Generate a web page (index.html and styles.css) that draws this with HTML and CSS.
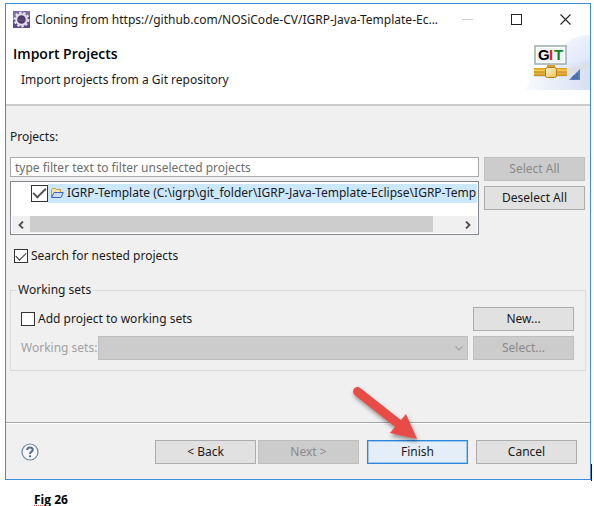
FILE: index.html
```html
<!DOCTYPE html>
<html lang="en">
<head>
<meta charset="utf-8">
<title>Import Projects</title>
<link rel="stylesheet" href="styles.css">
</head>
<body>
<main class="page">
  <section class="dialog">
    <div class="titlebar">
      <svg class="app-icon" width="17" height="17" viewBox="0 0 17 17" aria-hidden="true">
        <rect width="17" height="17" fill="#7d6ca6"/>
        <path d="M0 17V9l17-4v12z" fill="#5d4a88"/>
        <circle cx="8.500" cy="8.500" r="6.900" fill="none" stroke="#e9e6ee" stroke-width="2" stroke-dasharray="2.400 1.870"/>
        <circle cx="8.500" cy="8.500" r="5.300" fill="#4a3a68" stroke="#e4e0ea" stroke-width="2"/>
        <path d="M5 8h7M5 9.500h7" stroke="#6b5c86" stroke-width=".6"/>
      </svg>
      <span class="titlebar-text">Cloning from https://github.com/NOSiCode-CV/IGRP-Java-Template-Ec...</span>
      <div class="window-controls">
        <button type="button" class="window-button" aria-label="Minimize" disabled>
          <svg width="11" height="11" viewBox="0 0 11 11"><path d="M0 5.500h11" stroke="#d0d0d0"/></svg>
        </button>
        <button type="button" class="window-button" aria-label="Maximize">
          <svg width="11" height="11" viewBox="0 0 11 11"><rect x=".5" y=".5" width="10" height="10" fill="none" stroke="#222"/></svg>
        </button>
        <button type="button" class="window-button" aria-label="Close">
          <svg width="11" height="11" viewBox="0 0 11 11"><path d="M.5.5l10 10M10.500.5l-10 10" stroke="#222" stroke-width="1.100"/></svg>
        </button>
      </div>
    </div>

    <header class="banner">
      <div class="banner-text">
        <h1>Import Projects</h1>
        <p>Import projects from a Git repository</p>
      </div>
      <svg class="banner-art" width="64" height="56" viewBox="0 0 64 56" role="img" aria-label="Git">
        <defs>
          <linearGradient id="sky" x1="0" y1="0" x2="1" y2="1">
            <stop offset="0" stop-color="#f8faff"/><stop offset="1" stop-color="#dbe4f6"/>
          </linearGradient>
          <linearGradient id="low" x1="0" y1="0" x2="1" y2="0">
            <stop offset="0" stop-color="#f7f9fd"/><stop offset="1" stop-color="#d6dff4"/>
          </linearGradient>
          <linearGradient id="pipe" x1="0" y1="0" x2="0" y2="1">
            <stop offset="0" stop-color="#d99a1c"/><stop offset=".4" stop-color="#ffd75e"/><stop offset="1" stop-color="#c98a14"/>
          </linearGradient>
          <linearGradient id="hub" x1="0" y1="0" x2="1" y2="1">
            <stop offset="0" stop-color="#fffbe0"/><stop offset="1" stop-color="#eebc4a"/>
          </linearGradient>
        </defs>
        <path d="M28 22C36 8 48 0 64 0V32H28z" fill="url(#sky)"/>
        <path d="M0 55C4 42 12 35 22 31L64 26V55z" fill="url(#low)"/>
        <path d="M6 42L64 28v4L40 42z" fill="#dcdfe6"/>
        <rect x="9" y="11" width="31" height="18" fill="#fff" stroke="#9cadad" stroke-width="1.500"/>
        <rect x="11" y="13" width="27" height="14" fill="#eef3f6"/>
        <text class="art-label" x="12" y="25">G</text>
        <text class="art-label art-red" x="23" y="25">I</text>
        <text class="art-label art-green" x="28" y="25">T</text>
        <rect x="21" y="30" width="8" height="4" fill="#d99f27"/>
        <rect x="8" y="33" width="33" height="8" fill="url(#pipe)"/>
        <path d="M8 37h33" stroke="#b77a12"/>
        <rect x="19.500" y="32.500" width="11" height="10" rx="2" fill="url(#hub)" stroke="#b47c18"/>
        <path d="M43 45L54 34v11z" fill="#5a7db8"/>
        <path d="M47 44v-3h2v3M51 44v-6" stroke="#3f62a0" fill="none"/>
      </svg>
    </header>

    <form class="content">
      <label class="projects-label" for="filter">Projects:</label>
      <div class="projects">
        <div class="project-fields">
          <input class="filter" id="filter" type="text" placeholder="type filter text to filter unselected projects">
          <div class="project-list">
            <div class="project-row">
              <input class="check check-large" type="checkbox" id="project" checked>
              <label class="project-name" for="project">
                <svg width="14" height="12" viewBox="0 0 14 12" aria-hidden="true">
                  <path d="M1.500 10.500V2.500l1-1h3l1 1h4v3" fill="#fbe6ae" stroke="#c7963e"/>
                  <path d="M1.500 10.500L4 5.500h9.300l-2.300 5z" fill="#c8dcf8" stroke="#4267b8"/>
                </svg>
                <span>IGRP-Template (C:\igrp\git_folder\IGRP-Java-Template-Eclipse\IGRP-Temp</span>
              </label>
            </div>
            <div class="scrollbar">
              <button type="button" class="scroll-arrow" aria-label="Scroll left"><svg width="6" height="8" viewBox="0 0 6 8"><path d="M5 .5L1.500 4 5 7.500" fill="none" stroke="#4d4d4d" stroke-width="1.800"/></svg></button>
              <div class="scroll-track"><div class="scroll-thumb"></div></div>
              <button type="button" class="scroll-arrow" aria-label="Scroll right"><svg width="6" height="8" viewBox="0 0 6 8"><path d="M1 .5L4.500 4 1 7.500" fill="none" stroke="#4d4d4d" stroke-width="1.800"/></svg></button>
            </div>
          </div>
        </div>
        <div class="project-actions">
          <button type="button" class="button" disabled>Select All</button>
          <button type="button" class="button">Deselect All</button>
        </div>
      </div>

      <label class="check-row nested"><input class="check" type="checkbox" checked>Search for nested projects</label>

      <fieldset class="group">
        <legend>Working sets</legend>
        <div class="group-row">
          <label class="check-row"><input class="check" type="checkbox">Add project to working sets</label>
          <button type="button" class="button">New...</button>
        </div>
        <div class="group-row">
          <label class="sets-label" for="sets">Working sets:</label>
          <div class="select-wrap">
            <select class="sets" id="sets" disabled><option></option></select>
            <svg class="chevron" width="8" height="5" viewBox="0 0 8 5" aria-hidden="true"><path d="M.5.5L4 4 7.500.5" fill="none" stroke="#a3a3a3" stroke-width="1.200"/></svg>
          </div>
          <button type="button" class="button" disabled>Select...</button>
        </div>
      </fieldset>
    </form>

    <footer class="footer">
      <button type="button" class="help" aria-label="Help">
        <svg width="18" height="18" viewBox="0 0 18 18">
          <circle cx="9" cy="9" r="8" fill="#f6f8fb" stroke="#7183a3" stroke-width="1.200"/>
          <path d="M6.200 7C6.200 3.800 11.800 3.800 11.800 6.800C11.800 8.800 9 8.600 9 11" fill="none" stroke="#566b92" stroke-width="2"/>
          <rect x="8" y="12.300" width="2" height="2" fill="#566b92"/>
        </svg>
      </button>
      <div class="steps">
        <button type="button" class="button">&lt; Back</button>
        <button type="button" class="button" disabled>Next &gt;</button>
      </div>
      <button type="button" class="button primary">Finish</button>
      <button type="button" class="button">Cancel</button>
      <svg class="pointer" width="76" height="66" viewBox="0 0 76 66" aria-hidden="true">
        <path d="M8.500 9.500L51 43" stroke="#e94b46" stroke-width="9" stroke-linecap="round"/>
        <path d="M57 32L68 57 41 51z" fill="#e94b46"/>
      </svg>
    </footer>
  </section>
  <span class="caret"></span>
  <p class="caption"><span class="misspelled">Fig</span> 26</p>
</main>
</body>
</html>
```
FILE: styles.css
```css
* {
  box-sizing: border-box;
}

body {
  margin: 0;
  background: #fff;
  color: #1a1a1a;
  font: 12px/16px "Noto Sans", "Open Sans", sans-serif;
  overflow: hidden;
}

h1,
p {
  margin: 0;
}

button,
input,
select {
  font: inherit;
  color: inherit;
}

.page {
  position: relative;
  padding: 3px 3px 0 5px;
}

.dialog {
  border: 1px solid #3b8fdb;
  background: #f0f0f0;
}

.titlebar {
  display: flex;
  align-items: center;
  height: 31px;
  padding-left: 7px;
  background: #fff;
}

.titlebar-text {
  flex: 1;
  margin-left: 5px;
  white-space: nowrap;
}

.window-controls {
  display: flex;
}

.window-button {
  display: grid;
  place-items: center;
  width: 49px;
  height: 30px;
  padding: 0;
  border: 0;
  background: none;
}

.banner {
  display: flex;
  justify-content: space-between;
  height: 71px;
  background: #fff;
  border-bottom: 2px solid #cbcbcb;
}

.banner-text {
  padding: 10px 0 0 7px;
}

h1 {
  font-family: "Open Sans", sans-serif;
  font-size: 14px;
  font-weight: 600;
  line-height: 18px;
  color: #000;
}

.banner p {
  padding: 9px 0 0 8px;
}

.art-label {
  font: bold 15px "Liberation Sans", sans-serif;
}

.art-red {
  fill: #d81f26;
}

.art-green {
  fill: #15861f;
}

.content {
  padding: 23px 4px 0;
}

.projects-label {
  display: block;
  margin-bottom: 12px;
}

.projects {
  display: flex;
  gap: 5px;
  padding-right: 1px;
}

.project-fields {
  flex: 1;
  min-width: 0;
}

.filter {
  display: block;
  width: 100%;
  height: 20px;
  padding: 0 4px;
  border: 1px solid #ababab;
  background: #fff;
}

.filter::placeholder {
  color: #6d6d6d;
  opacity: 1;
}

.project-list {
  margin-top: 4px;
  padding: 1px;
  border: 1px solid #828790;
  background: #fff;
}

.project-row {
  display: flex;
  align-items: center;
  height: 20px;
  margin-bottom: 13px;
  padding-left: 19px;
}

.project-name {
  display: flex;
  flex: 1;
  align-items: center;
  gap: 3px;
  min-width: 0;
  height: 19px;
  padding-left: 2px;
  overflow: hidden;
  background: #cce8ff;
  white-space: nowrap;
}

.project-name svg {
  flex: none;
}

.scrollbar {
  display: flex;
  height: 17px;
  background: #f0f0f0;
}

.scroll-arrow {
  display: grid;
  place-items: center;
  width: 18px;
  padding: 0;
  border: 0;
  background: none;
}

.scroll-track {
  flex: 1;
}

.scroll-thumb {
  width: 94%;
  height: 16px;
  background: #cdcdcd;
}

.project-actions {
  display: flex;
  flex-direction: column;
  gap: 5px;
}

.button {
  flex: none;
  width: 101px;
  height: 24px;
  padding: 0;
  border: 1px solid #adadad;
  background: #e1e1e1;
  text-align: center;
}

.button:disabled {
  border-color: #bfbfbf;
  background: #cccccc;
  color: #8a8a8a;
}

.primary {
  border-color: #2b86d9;
  background: #e3eef8;
  box-shadow: inset 0 0 0 1px #9cc8ef;
}

.check {
  appearance: none;
  flex: none;
  display: grid;
  place-items: center;
  width: 14px;
  height: 14px;
  margin: 0;
  border: 1px solid #333;
  background: #fff;
}

.check:checked::before {
  content: "";
  width: 9px;
  height: 5px;
  margin-top: -3px;
  border: solid #333;
  border-width: 0 0 1px 1px;
  transform: rotate(-45deg);
}

.check-large {
  width: 17px;
  height: 17px;
}

.check-large:checked::before {
  width: 11px;
  height: 5px;
  border-width: 0 0 2px 2px;
  border-color: #555;
}

.check-row {
  display: flex;
  flex: 1;
  align-items: center;
  gap: 3px;
}

.nested {
  margin: 13px 0 18px 4px;
}

.group {
  min-width: 0;
  margin: 0;
  padding: 9px 11px 10px 10px;
  border: 1px solid #dcdcdc;
}

legend {
  margin-left: -4px;
  padding: 0 2px 0 1px;
}

.group-row {
  display: flex;
  align-items: center;
  gap: 5px;
}

.group-row + .group-row {
  margin-top: 5px;
}

.sets-label {
  margin-right: -4px;
  color: #a0a0a0;
}

.select-wrap {
  display: grid;
  flex: 1;
  align-items: center;
}

.sets {
  appearance: none;
  grid-area: 1 / 1;
  width: 100%;
  height: 24px;
  border: 1px solid #bfbfbf;
  border-radius: 0;
  background: #cccccc;
  opacity: 1;
}

.chevron {
  grid-area: 1 / 1;
  justify-self: end;
  margin-right: 5px;
}

.footer {
  position: relative;
  display: flex;
  align-items: center;
  gap: 8px;
  margin-top: 51px;
  padding: 17px 13px 15px 15px;
  border-top: 1px solid #a5a5a5;
  box-shadow: inset 0 1px #fff;
}

.help {
  display: grid;
  padding: 0;
  border: 0;
  background: none;
}

.steps {
  display: flex;
  gap: 2px;
  margin-left: auto;
}

.pointer {
  position: absolute;
  right: 165px;
  bottom: 31px;
  filter: drop-shadow(1px 3px 2px rgba(0, 0, 0, 0.4));
}

.caret {
  position: absolute;
  top: 464px;
  right: 2px;
  width: 1px;
  height: 17px;
  background: #000;
}

.caption {
  padding: 12px 0 0 29px;
  color: #000;
  font-family: "Open Sans", sans-serif;
  font-weight: bold;
}

.misspelled {
  text-decoration: underline dotted #e03030 1px;
}
```
